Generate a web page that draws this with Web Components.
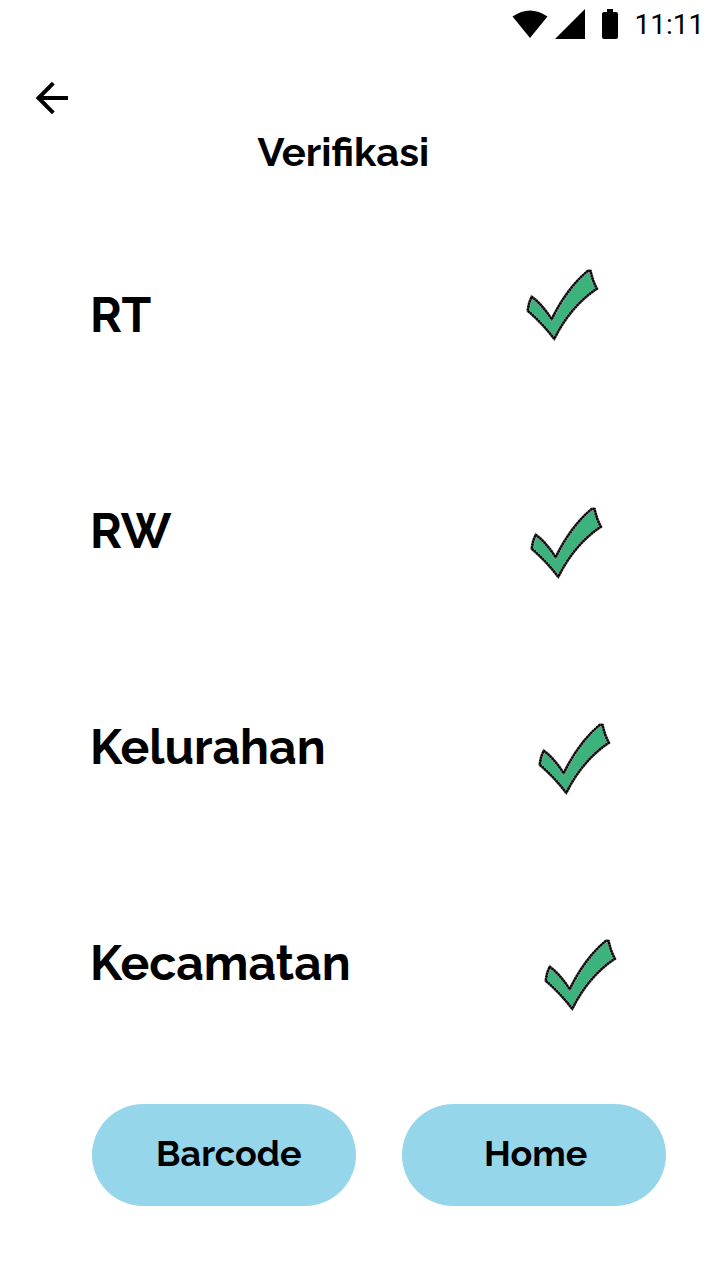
<!DOCTYPE html>
<html lang="id">
<head>
<meta charset="utf-8">
<title>Verifikasi</title>
<style>html,body{margin:0;background:#fff}</style>
</head>
<body>
<verification-screen></verification-screen>
<script>
const define = (name, html) => {
  const template = document.createElement('template');
  template.innerHTML = html;
  customElements.define(name, class extends HTMLElement {
    connectedCallback() {
      if (this.shadowRoot) return;
      this.attachShadow({mode: 'open'}).append(template.content.cloneNode(true));
    }
  });
};

define('status-bar', `
<style>
:host{display:flex;height:48px;box-sizing:border-box;justify-content:flex-end;padding-right:15.5px;color:#000;font:400 28px/50px Roboto,sans-serif}
svg{display:block;width:124px;height:48px;flex:none}
span{width:70px;margin-left:.5px}
</style>
<svg viewBox="510 0 124 48" aria-hidden="true">
<path d="M512.5 16.5Q530 4.5 547.5 16.5L530 38Z"/>
<path d="M555 39L585 9V39Z"/>
<path d="M607 9H613V12H616Q618 12 618 14V37Q618 39 616 39H604Q602 39 602 37V14Q602 12 604 12H607Z"/>
</svg><span>11:11</span>`);

define('back-arrow', `
<style>:host{display:block;width:34px;height:34px}svg{display:block}</style>
<svg width="34" height="34" viewBox="35 81 34 34" aria-label="Kembali"><path d="M68 98H38.5M53.3 83.2L38.5 98L53.3 112.8" fill="none" stroke="#000" stroke-width="4"/></svg>`);

define('check-mark', `
<style>:host{display:block;width:74px;height:74px}svg{display:block}</style>
<svg width="74" height="74" viewBox="525 268 74 74" aria-hidden="true">
<defs><path id="tick" d="M531.7 296.8Q541 303 551.7 319.3C560 302 573 283 588 270.8L590.5 271Q592.5 281 596.8 288.7C580 300 565 317 554.3 338.8Q542 323 527.8 310.8Q528.5 303 531.7 296.8Z"/></defs>
<use href="#tick" fill="#3cb27c" stroke="#b4a8aa" stroke-width="3"/>
<use href="#tick" fill="none" stroke="#333" stroke-width="2"/>
<use href="#tick" fill="none" stroke="#000" stroke-width="2.3" stroke-dasharray="1.5 1.3"/>
</svg>`);

define('verification-row', `
<style>
:host{display:flex;height:216px;box-sizing:border-box;padding-left:90px;font-size:48px;line-height:220px}
check-mark{margin-left:auto;margin-right:var(--check-right);margin-top:var(--check-top)}
</style><span><slot></slot></span><check-mark></check-mark>`);

define('pill-button', `
<style>
:host{display:block;width:264px;height:102px;box-sizing:border-box;border-radius:51px;background:#96d6ea;font-size:36px}
button{all:unset;display:block;box-sizing:border-box;width:100%;height:100%;padding:0 0 4px var(--text-x)}
</style><button><slot></slot></button>`);

define('verification-screen', `
<style>
:host{display:flex;flex-direction:column;width:720px;height:1280px;overflow:hidden;background:#fff;color:#000;font-family:Raleway,Lato,sans-serif;font-weight:700}
header{height:157px;flex:none}
back-arrow{margin:33px 0 0 35px}
h1{margin:12px 0 0 257.4px;font-size:40px;line-height:50px;font-weight:700}
footer{display:flex;gap:46px;margin:35px 0 0 92px}
</style>
<status-bar></status-bar>
<header><back-arrow></back-arrow><h1>Verifikasi</h1></header>
<main>
<verification-row style="--check-right:121px;--check-top:63px">RT</verification-row>
<verification-row style="--check-right:117px;--check-top:85px">RW</verification-row>
<verification-row style="--check-right:109px;--check-top:85px">Kelurahan</verification-row>
<verification-row style="--check-right:103px;--check-top:85px">Kecamatan</verification-row>
</main>
<footer>
<pill-button style="--text-x:64px">Barcode</pill-button>
<pill-button style="--text-x:82px">Home</pill-button>
</footer>`);
</script>
</body>
</html>
